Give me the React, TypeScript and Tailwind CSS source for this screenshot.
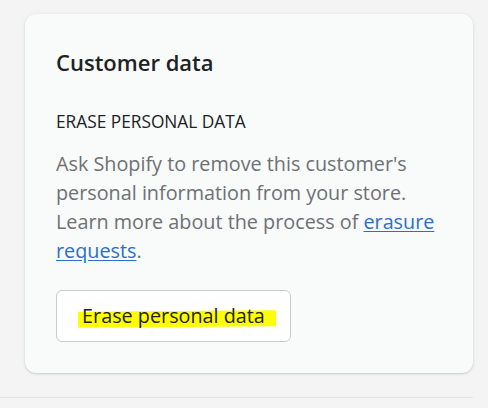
export default function App() {
  return (
    <div
      className="min-h-[408px] w-[488px] bg-[#f4f4f4] pt-[14px]"
      style={{ fontFamily: '"Open Sans", "Noto Sans", sans-serif' }}
    >
      <div className="ml-[25px] w-[448px] rounded-[11px] bg-[#f9fafa] px-[31px] pt-[34px] pb-[31px] shadow-[0_0_5px_rgba(23,24,24,0.05),0_1px_2px_rgba(0,0,0,0.15)]">
        <h2 className="text-[22px] leading-[28px] font-semibold text-[#202223]">Customer data</h2>
        <h3 className="mt-[35px] text-[17.3px] leading-[22px] font-normal text-[#202223]">
          ERASE PERSONAL DATA
        </h3>
        <p className="mt-[16px] w-[386px] text-[19.8px] leading-[29px] text-[#6d7175]">
          Ask Shopify to remove this customer's personal information from your store. Learn more about
          the process of{" "}
          <a href="#" className="text-[#2c6ecb] underline underline-offset-[2px]">
            erasure requests
          </a>
          .
        </p>
        <button className="mt-[25px] flex h-[52px] w-[235px] items-center justify-center rounded-[6px] border border-[#c9cccf] bg-white">
          <span className="relative text-[19.8px] leading-[22px] text-[#202223]">
            <span className="absolute top-[6px] -left-[4px] -right-[11px] h-[16px] -rotate-[0.4deg] bg-[#ffff00]" />
            <span className="relative">Erase personal data</span>
          </span>
        </button>
      </div>
      <div className="mt-[24px] h-px w-[473px] bg-[#e1e3e5]" />
    </div>
  );
}
